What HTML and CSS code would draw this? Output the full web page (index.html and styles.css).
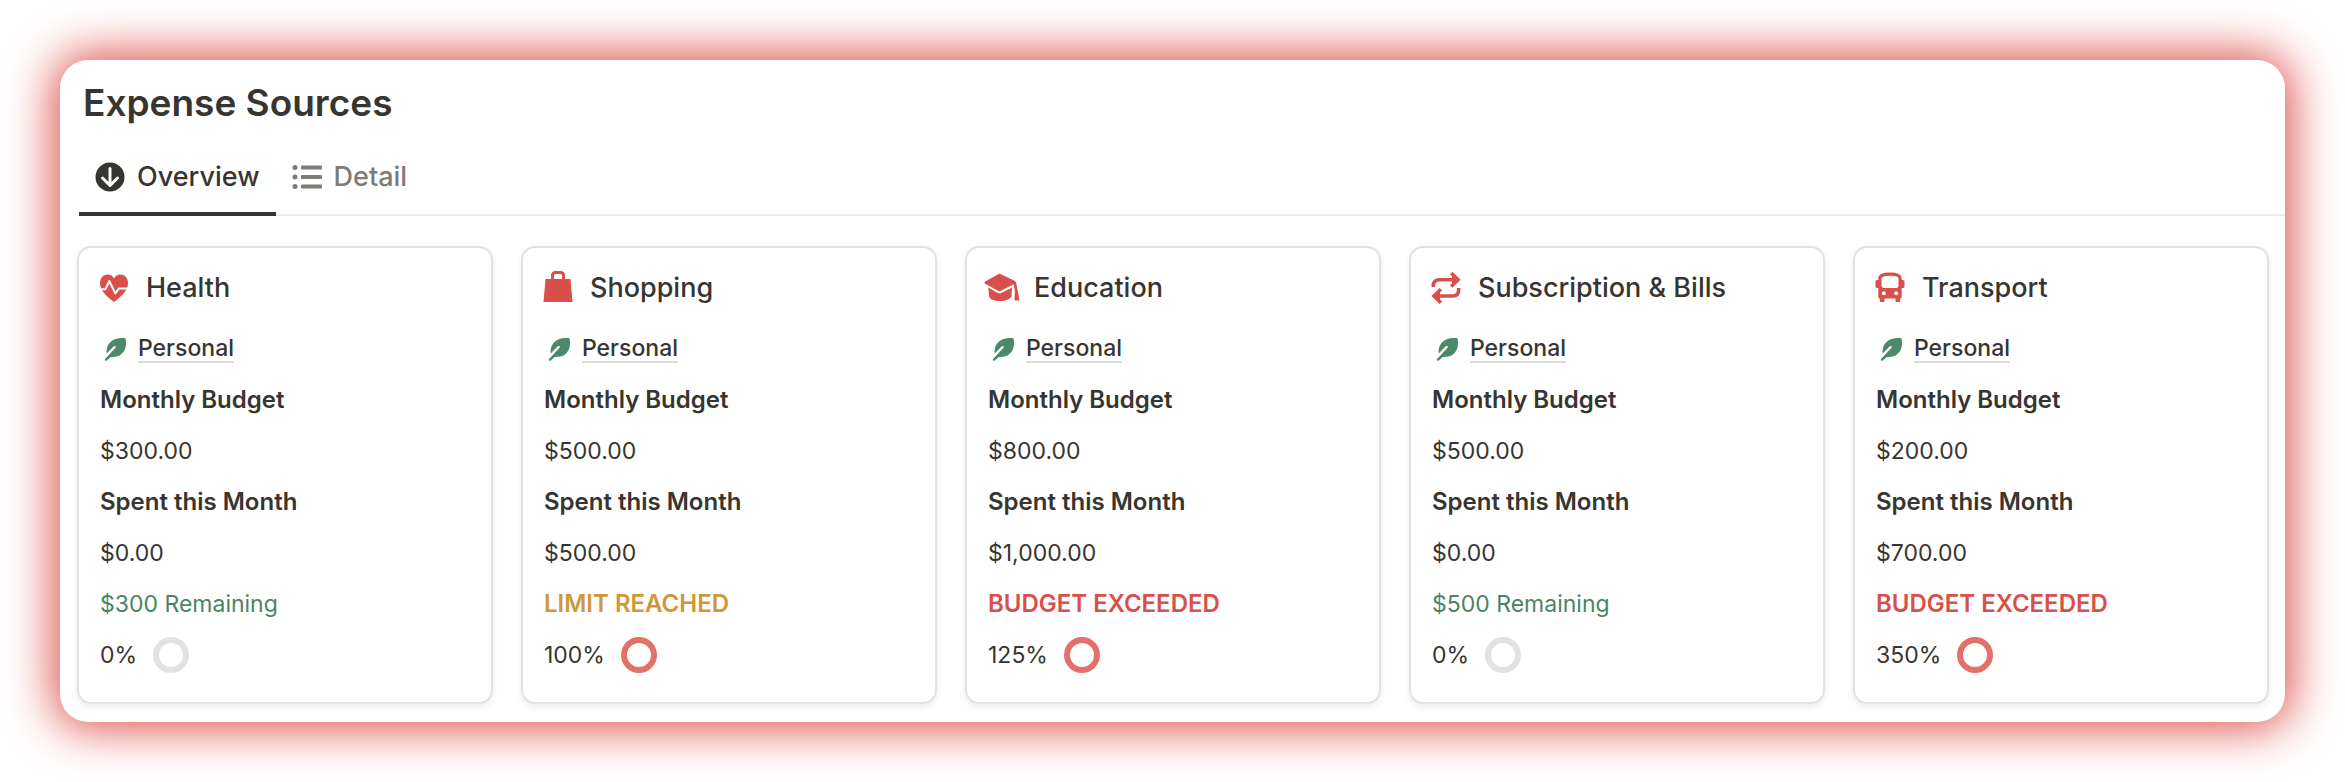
FILE: index.html
```
<!DOCTYPE html>
<html lang="en">
<head>
  <meta charset="UTF-8">
  <title>Expense Sources</title>
  <link rel="stylesheet" href="styles.css">
</head>
<body>
  <svg class="sprite" aria-hidden="true">
    <symbol id="icon-leaf" viewBox="0 0 28 28">
      <path fill="currentColor" d="M25.500 3.200C18 2.400 12.500 4.400 9.300 8.200C6.800 11.300 6.300 15 6.700 18.600L13.800 11.300C15 10.200 16.400 11.500 15.300 12.700L9.500 19.200L5 24C4.200 25.200 5.700 26.400 6.800 25.500L10.800 21.900C15.500 22 19.500 21.400 22.500 18C26 14 26.600 9.300 25.500 3.200Z"/>
      <path fill="none" stroke="#fff" stroke-width="1.600" stroke-linecap="round" d="M6.600 20.600L15 12"/>
    </symbol>
    <symbol id="icon-health" viewBox="0 0 36 36">
      <path fill="currentColor" d="M18 32C14 28.800 4 22.500 4 13C4 8 7.300 4.500 11.500 4.500C14.300 4.500 16.700 6 18 8.600C19.300 6 21.700 4.500 24.500 4.500C28.700 4.500 32 8 32 13C32 22.500 22 28.800 18 32Z"/>
      <path fill="none" stroke="#fff" stroke-width="2" stroke-linejoin="round" d="M4 19.300H9.400L13.300 11L19.300 23.400L22.800 18.600H32"/>
    </symbol>
    <symbol id="icon-shopping" viewBox="0 0 36 36">
      <path fill="currentColor" d="M5.500 9H30.500L32.500 32H3.500Z"/>
      <path fill="none" stroke="currentColor" stroke-width="3" d="M12.500 10V5.500Q12.500 2.500 15.500 2.500H20.500Q23.500 2.500 23.500 5.500V10"/>
    </symbol>
    <symbol id="icon-education" viewBox="0 0 36 36">
      <path fill="currentColor" d="M15.500 3.500L30 10.400C31.500 11 32 12 32.300 13.400L35.500 30.500H30.600L30.800 20.500L29.700 14.200L17 20.800C16 21.300 15 21.300 14 20.800L1.200 13.700C.2 13.100 .2 12 1.200 11.500Z"/>
      <path fill="currentColor" d="M4.200 17.600L13.800 23C15 23.600 16.200 23.600 17.300 23L28 17.400L27.500 26.200C27.400 28.600 22 31 16 31C10 31 5.400 28.800 5.200 26.400Z"/>
    </symbol>
    <symbol id="icon-bills" viewBox="0 0 36 36">
      <g fill="none" stroke="currentColor" stroke-width="3.600">
        <path d="M5.300 17V16C5.300 12 7.500 9.800 11.500 9.800H29"/>
        <path d="M23.200 3L30 9.800L23.200 16.500"/>
        <path d="M30.700 18V19.800C30.700 23.800 28.500 26 24.500 26H7"/>
        <path d="M12.800 19.300L6 26L12.800 32.800"/>
      </g>
      <path fill="currentColor" d="M24 5.500L32.500 9.800L24 14ZM12 21.800L3.500 26L12 30.300Z"/>
    </symbol>
    <symbol id="icon-transport" viewBox="0 0 36 36">
      <path fill="currentColor" fill-rule="evenodd" d="M6.300 10V8C6.300 4.500 11 2.500 18 2.500C25 2.500 29.700 4.500 29.700 8V10H31Q32.500 10 32.500 11.500V16.500Q32.500 18 31 18H29.700V27Q29.700 28.500 28.200 28.500V31Q28.200 32 27 32H24.600Q23.500 32 23.500 31V28.500H12.500V31Q12.500 32 11.400 32H9Q7.800 32 7.800 31V28.500Q6.300 28.500 6.300 27V18H5Q3.500 18 3.500 16.500V11.500Q3.500 10 5 10ZM9.500 8.500V15.500Q9.500 18 12 18H24Q26.500 18 26.500 15.500V8.500Q26.500 5.700 18 5.700Q9.500 5.700 9.500 8.500ZM11.800 21.200A2 2 0 1 0 11.800 25.200A2 2 0 1 0 11.800 21.200ZM24.200 21.200A2 2 0 1 0 24.200 25.200A2 2 0 1 0 24.200 21.200Z"/>
    </symbol>
  </svg>

  <main class="panel">
    <h1 class="panel-title">Expense Sources</h1>

    <div class="tabs" role="tablist">
      <button class="tab active" role="tab" aria-selected="true">
        <svg class="tab-icon" viewBox="0 0 30 30" aria-hidden="true">
          <circle cx="15" cy="15" r="14.500" fill="currentColor"/>
          <path fill="none" stroke="#fff" stroke-width="3" stroke-linecap="round" stroke-linejoin="round" d="M15 6.500V23M7.500 16L15 23.500L22.500 16"/>
        </svg>
        Overview
      </button>
      <button class="tab" role="tab" aria-selected="false">
        <svg class="tab-icon" viewBox="0 0 30 30" aria-hidden="true">
          <g fill="currentColor">
            <circle cx="3" cy="5.500" r="2.500"/>
            <circle cx="3" cy="15" r="2.500"/>
            <circle cx="3" cy="24.500" r="2.500"/>
            <rect x="9" y="3.500" width="21" height="4" rx="1"/>
            <rect x="9" y="13" width="21" height="4" rx="1"/>
            <rect x="9" y="22.500" width="21" height="4" rx="1"/>
          </g>
        </svg>
        Detail
      </button>
    </div>

    <section class="cards">
      <article class="card">
        <h2 class="card-title"><svg class="card-icon" aria-hidden="true"><use href="#icon-health"/></svg>Health</h2>
        <div class="card-body">
          <div class="row"><svg class="leaf" aria-hidden="true"><use href="#icon-leaf"/></svg><a href="#">Personal</a></div>
          <div class="row label">Monthly Budget</div>
          <div class="row">$300.00</div>
          <div class="row label">Spent this Month</div>
          <div class="row">$0.00</div>
          <div class="row remaining">$300 Remaining</div>
          <div class="row percent">0% <span class="ring"></span></div>
        </div>
      </article>

      <article class="card">
        <h2 class="card-title"><svg class="card-icon" aria-hidden="true"><use href="#icon-shopping"/></svg>Shopping</h2>
        <div class="card-body">
          <div class="row"><svg class="leaf" aria-hidden="true"><use href="#icon-leaf"/></svg><a href="#">Personal</a></div>
          <div class="row label">Monthly Budget</div>
          <div class="row">$500.00</div>
          <div class="row label">Spent this Month</div>
          <div class="row">$500.00</div>
          <div class="row limit">LIMIT REACHED</div>
          <div class="row percent">100% <span class="ring full"></span></div>
        </div>
      </article>

      <article class="card">
        <h2 class="card-title"><svg class="card-icon" aria-hidden="true"><use href="#icon-education"/></svg>Education</h2>
        <div class="card-body">
          <div class="row"><svg class="leaf" aria-hidden="true"><use href="#icon-leaf"/></svg><a href="#">Personal</a></div>
          <div class="row label">Monthly Budget</div>
          <div class="row">$800.00</div>
          <div class="row label">Spent this Month</div>
          <div class="row">$1,000.00</div>
          <div class="row exceeded">BUDGET EXCEEDED</div>
          <div class="row percent">125% <span class="ring full"></span></div>
        </div>
      </article>

      <article class="card">
        <h2 class="card-title"><svg class="card-icon" aria-hidden="true"><use href="#icon-bills"/></svg>Subscription &amp; Bills</h2>
        <div class="card-body">
          <div class="row"><svg class="leaf" aria-hidden="true"><use href="#icon-leaf"/></svg><a href="#">Personal</a></div>
          <div class="row label">Monthly Budget</div>
          <div class="row">$500.00</div>
          <div class="row label">Spent this Month</div>
          <div class="row">$0.00</div>
          <div class="row remaining">$500 Remaining</div>
          <div class="row percent">0% <span class="ring"></span></div>
        </div>
      </article>

      <article class="card">
        <h2 class="card-title"><svg class="card-icon" aria-hidden="true"><use href="#icon-transport"/></svg>Transport</h2>
        <div class="card-body">
          <div class="row"><svg class="leaf" aria-hidden="true"><use href="#icon-leaf"/></svg><a href="#">Personal</a></div>
          <div class="row label">Monthly Budget</div>
          <div class="row">$200.00</div>
          <div class="row label">Spent this Month</div>
          <div class="row">$700.00</div>
          <div class="row exceeded">BUDGET EXCEEDED</div>
          <div class="row percent">350% <span class="ring full"></span></div>
        </div>
      </article>
    </section>
  </main>
</body>
</html>
```

FILE: styles.css
```
* {
  box-sizing: border-box;
}

body {
  margin: 0;
  padding: 60px;
  background: #fff;
  color: #373530;
  font-family: Inter, "Liberation Sans", sans-serif;
  font-size: 23px;
  line-height: 36px;
}

.sprite {
  display: none;
}

.panel {
  padding: 18px 0 18px 17px;
  background: #fff;
  border-radius: 28px;
  box-shadow: 0 0 48px 6px #dc4d45;
}

.panel-title {
  margin: 0;
  padding-left: 6px;
  font-size: 37px;
  font-weight: 600;
  line-height: 50px;
}

/* tabs */
.tabs {
  display: flex;
  margin: 12px 0 30px 2px;
  box-shadow: inset 0 -2px #ebebea;
}

.tab {
  display: flex;
  align-items: center;
  gap: 12px;
  padding: 20px 16px 18px;
  border: none;
  border-bottom: 4px solid transparent;
  background: none;
  color: #7d7c78;
  font-family: inherit;
  font-size: 27px;
  font-weight: 500;
  line-height: 34px;
  cursor: pointer;
}

.tab.active {
  color: #373530;
  border-bottom-color: #373530;
}

.tab-icon {
  width: 30px;
  height: 30px;
}

/* cards */
.cards {
  display: grid;
  grid-template-columns: repeat(5, 1fr);
  gap: 28px;
  padding-right: 16px;
}

.card {
  padding: 22px 17px 29px;
  border: 2px solid #e2e2e1;
  border-radius: 14px;
  box-shadow: 0 3px 6px rgba(15, 15, 15, 0.08);
}

.card-title {
  display: flex;
  align-items: center;
  gap: 14px;
  margin: 0 0 25px;
  font-size: 27px;
  font-weight: 500;
  line-height: 36px;
}

.card-icon {
  width: 36px;
  height: 36px;
  color: #d94f4a;
}

.card-body {
  display: flex;
  flex-direction: column;
  gap: 15px;
  padding-left: 4px;
}

.row {
  display: flex;
  align-items: center;
  min-height: 36px;
}

.row a {
  color: inherit;
  font-weight: 500;
  line-height: 26px;
  text-decoration: none;
  border-bottom: 2px solid #dcdcdb;
}

.leaf {
  width: 28px;
  height: 28px;
  margin-right: 10px;
  color: #4a8a6a;
}

.label,
.limit,
.exceeded {
  font-size: 24px;
  font-weight: 600;
}

.remaining {
  color: #4a8465;
}

.limit {
  color: #d0973a;
}

.exceeded {
  color: #d94f4a;
}

.percent {
  gap: 16px;
}

.ring {
  width: 36px;
  height: 36px;
  border: 6px solid #e2e2e0;
  border-radius: 50%;
}

.ring.full {
  border-color: #e27169;
}
```
